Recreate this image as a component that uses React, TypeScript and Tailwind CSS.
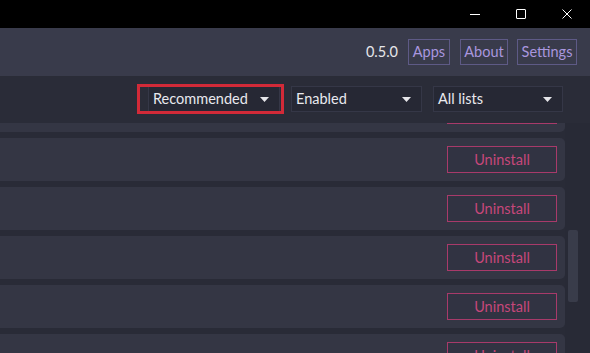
import React from "react";

const Caret = () => (
  <svg width="9" height="5" viewBox="0 0 9 5" className="shrink-0">
    <path d="M0 0 L9 0 L4.5 5 Z" fill="#e6e6ea" />
  </svg>
);

function Dropdown({ label, width }: { label: string; width: string }) {
  return (
    <div
      className={`${width} h-[26px] flex items-center justify-between pl-[4px] pr-[10px] bg-[#262834] border border-[#353747] text-[14.5px] text-[#e9e9ee]`}
    >
      <span>{label}</span>
      <Caret />
    </div>
  );
}

function Card({ first }: { first?: boolean }) {
  return (
    <div
      className={`h-[43px] shrink-0 bg-[#343644] rounded-r-[5px] flex items-center justify-end pr-[8px] ${
        first ? "-mt-[34px]" : ""
      }`}
    >
      <div className="w-[110px] h-[27px] border border-[#a83a6a] bg-[#313342] flex items-center justify-center text-[14.5px] text-[#c6477a]">
        Uninstall
      </div>
    </div>
  );
}

export default function App() {
  return (
    <div
      className="w-[590px] h-[353px] overflow-hidden flex flex-col bg-[#282a36]"
      style={{ fontFamily: "Lato, 'Noto Sans', sans-serif" }}
    >
      {/* title bar */}
      <div className="h-[28px] shrink-0 bg-black flex justify-end">
        <div className="w-[46px] h-full flex items-center justify-center">
          <div className="w-[10px] h-[1px] bg-white" />
        </div>
        <div className="w-[46px] h-full flex items-center justify-center">
          <div className="w-[10px] h-[10px] border border-white rounded-[1px]" />
        </div>
        <div className="w-[46px] h-full flex items-center justify-center">
          <svg width="10" height="10" viewBox="0 0 10 10">
            <path d="M0.5 0.5 L9.5 9.5 M9.5 0.5 L0.5 9.5" stroke="white" strokeWidth="1" />
          </svg>
        </div>
      </div>

      {/* header */}
      <div className="h-[48px] shrink-0 bg-[#393b4b] flex items-center justify-end pr-[13px] text-[14.5px]">
        <span className="text-[#e6e6ea] mr-[10px]">0.5.0</span>
        <div className="h-[26px] w-[42px] border border-[#5e5a86] flex items-center justify-center text-[#a996df] mr-[10px]">
          Apps
        </div>
        <div className="h-[26px] w-[48px] border border-[#5e5a86] flex items-center justify-center text-[#a996df] mr-[9px]">
          About
        </div>
        <div className="h-[26px] w-[60px] border border-[#5e5a86] flex items-center justify-center text-[#a996df]">
          Settings
        </div>
      </div>

      {/* filter bar */}
      <div className="h-[47px] shrink-0 bg-[#2a2c38] border-t border-[#2a2c37] flex items-start justify-end pt-[9px] pr-[27px] gap-[11px]">
        <div className="relative">
          <Dropdown label="Recommended" width="w-[132px]" />
          <div className="absolute -left-[11px] -right-[4px] -top-[2px] -bottom-[2px] border-[3px] border-[#d22a38] pointer-events-none" />
        </div>
        <Dropdown label="Enabled" width="w-[131px]" />
        <Dropdown label="All lists" width="w-[130px]" />
      </div>

      {/* list */}
      <div className="flex-1 flex min-h-0">
        <div className="w-[565px] flex flex-col gap-[6px] overflow-hidden bg-[#292b37]">
          <Card first />
          <Card />
          <Card />
          <Card />
          <Card />
          <Card />
        </div>
        <div className="flex-1 relative">
          <div className="absolute left-[3px] top-[107px] w-[10px] h-[72px] bg-[#393c4a] rounded-[2px]" />
        </div>
      </div>
    </div>
  );
}
